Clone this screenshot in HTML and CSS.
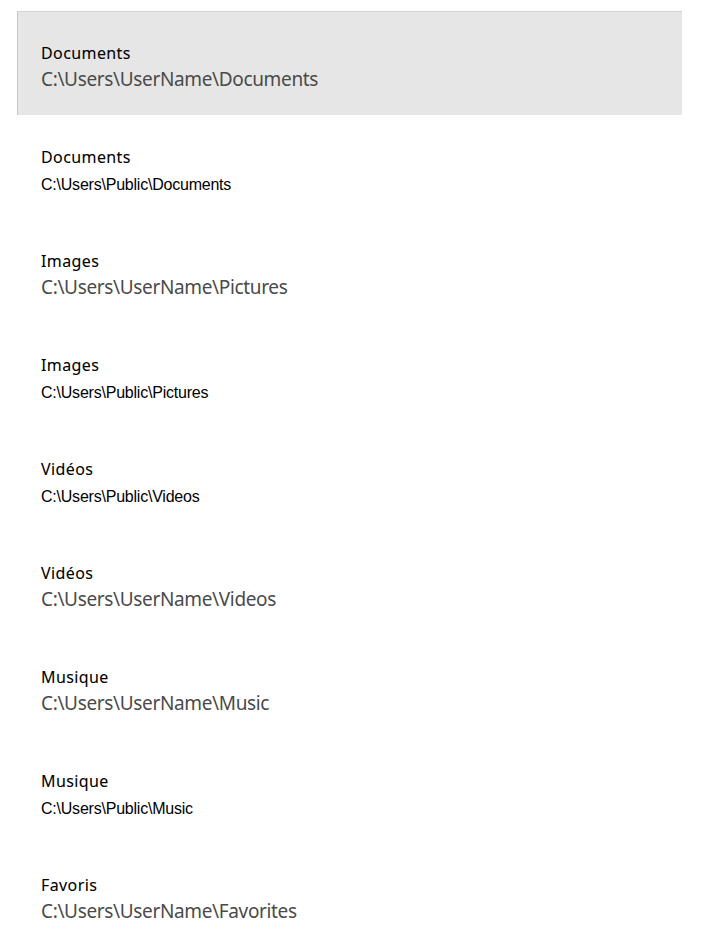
FILE: index.html
```html
<!DOCTYPE html>
<html lang="fr">
<head>
<meta charset="utf-8">
<title>Bibliothèques</title>
<link rel="stylesheet" href="styles.css">
</head>
<body>
<ul class="list">
  <li class="item selected"><div class="title">Documents</div><div class="path user">C:\Users\UserName\Documents</div></li>
  <li class="item"><div class="title">Documents</div><div class="path public">C:\Users\Public\Documents</div></li>
  <li class="item"><div class="title">Images</div><div class="path user">C:\Users\UserName\Pictures</div></li>
  <li class="item"><div class="title">Images</div><div class="path public">C:\Users\Public\Pictures</div></li>
  <li class="item"><div class="title">Vidéos</div><div class="path public">C:\Users\Public\Videos</div></li>
  <li class="item"><div class="title">Vidéos</div><div class="path user">C:\Users\UserName\Videos</div></li>
  <li class="item"><div class="title">Musique</div><div class="path user">C:\Users\UserName\Music</div></li>
  <li class="item"><div class="title">Musique</div><div class="path public">C:\Users\Public\Music</div></li>
  <li class="item"><div class="title">Favoris</div><div class="path user">C:\Users\UserName\Favorites</div></li>
</ul>
</body>
</html>
```
FILE: styles.css
```css
html, body {
  margin: 0;
  padding: 0;
  background: #ffffff;
}
.list {
  list-style: none;
  margin: 0;
  padding: 11px 0 0 17px;
  width: 665px;
}
.item {
  box-sizing: border-box;
  height: 104px;
  padding: 32px 0 0 24px;
}
.item.selected {
  background: #e6e6e6;
  border-top: 1px solid #d2d2d2;
  border-left: 1px solid #c9c9c9;
  padding-top: 31px;
  padding-left: 23px;
}
.title {
  font-family: "Noto Sans", "Liberation Sans", sans-serif;
  font-size: 16px;
  line-height: 20px;
  letter-spacing: 0.4px;
  color: #000000;
  -webkit-text-stroke: 0.08px #000000;
}
.path.user {
  font-family: "Noto Sans", "Liberation Sans", sans-serif;
  font-size: 19px;
  line-height: 24px;
  letter-spacing: -0.35px;
  color: #4a4a4a;
  margin-top: 4px;
}
.path.public {
  font-family: "Liberation Sans", Arial, sans-serif;
  font-size: 16px;
  line-height: 20px;
  letter-spacing: -0.22px;
  color: #000000;
  margin-top: 8px;
}
```
